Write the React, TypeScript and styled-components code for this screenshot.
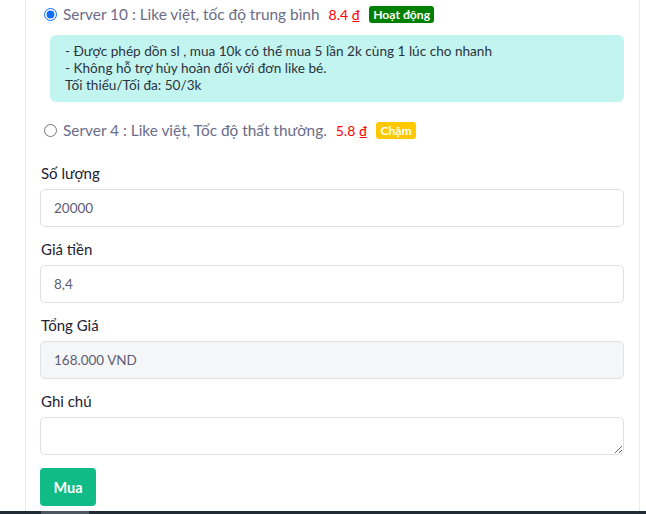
import React from 'react'
import styled, { createGlobalStyle } from 'styled-components'

const GlobalStyle = createGlobalStyle`
  html, body {
    margin: 0;
    padding: 0;
    background: #fff;
    font-family: Lato, "Noto Sans", sans-serif;
  }
  * { box-sizing: border-box; }
`

const Page = styled.div`
  display: flex;
  flex-direction: column;
  width: 646px;
  height: 514px;
  overflow: hidden;
`

const Card = styled.div`
  margin-left: 25px;
  width: 615px;
  height: 511px;
  flex-shrink: 0;
  border-left: 1px solid #e9ebf0;
  border-right: 1px solid #e9ebf0;
  padding: 3px 15px 0 14px;
  display: flex;
  flex-direction: column;
`

const ServerRow = styled.label<{ $mt?: number }>`
  display: flex;
  align-items: center;
  height: 22px;
  padding-left: 4px;
  font-size: 15.4px;
  color: #6b6c88;
  white-space: nowrap;
  margin-top: ${(p) => p.$mt ?? 0}px;
`

const Radio = styled.input`
  width: 13px;
  height: 13px;
  margin: 0 6px 0 0;
  accent-color: #0d6efd;
`

const Price = styled.span`
  color: #ff0000;
  margin-left: 9px;
  font-size: 14px;
`

const Badge = styled.span<{ $bg: string }>`
  display: inline-flex;
  align-items: center;
  height: 17px;
  padding: 0 4px;
  margin-left: 9px;
  border-radius: 3px;
  background: ${(p) => p.$bg};
  color: #fff;
  font-size: 12.2px;
  font-weight: 700;
`

const Note = styled.div`
  margin: 10px 0 0 10px;
  background: #c3f5f0;
  border-radius: 6px;
  padding: 8px 15px;
  font-size: 13.6px;
  line-height: 17px;
  color: #2b3340;
`

const Group = styled.div<{ $mt: number }>`
  display: flex;
  flex-direction: column;
  margin-top: ${(p) => p.$mt}px;
`

const Label = styled.div`
  height: 22px;
  line-height: 22px;
  font-size: 15px;
  color: #222230;
  margin-bottom: 5px;
  padding-left: 1px;
`

const Field = styled.input<{ $disabled?: boolean }>`
  height: 38px;
  width: 100%;
  border: 1px solid #dee0e6;
  border-radius: 5px;
  padding: 0 13px;
  font-family: inherit;
  font-size: 13.5px;
  color: #5e5d75;
  background: ${(p) => (p.$disabled ? '#f5f6f8' : '#fff')};
  outline: none;
`

const Area = styled.textarea`
  height: 38px;
  width: 100%;
  border: 1px solid #dee0e6;
  border-radius: 5px;
  padding: 6px 13px;
  font-family: inherit;
  font-size: 13.5px;
  outline: none;
  resize: vertical;
  display: block;
`

const BuyButton = styled.button`
  margin-top: 13px;
  align-self: flex-start;
  width: 56px;
  height: 38px;
  border: none;
  border-radius: 4px;
  background: #10bb85;
  color: #fff;
  font-family: inherit;
  font-size: 14.5px;
  font-weight: 700;
`

const Footer = styled.div`
  height: 3px;
  flex-shrink: 0;
  background: #1f2c34;
  display: flex;
`

const FooterMark = styled.div`
  margin-left: 41px;
  width: 48px;
  background: #4c565e;
`

export default function App() {
  return (
    <Page>
      <GlobalStyle />
      <Card>
        <ServerRow>
          <Radio type="radio" name="server" defaultChecked />
          <span>Server 10 : Like việt, tốc độ trung bình</span>
          <Price>8.4 ₫</Price>
          <Badge $bg="#008000">Hoạt động</Badge>
        </ServerRow>
        <Note>
          - Được phép dồn sl , mua 10k có thể mua 5 lần 2k cùng 1 lúc cho nhanh
          <br />- Không hỗ trợ hủy hoàn đối với đơn like bé.
          <br />
          Tối thiểu/Tối đa: 50/3k
        </Note>
        <ServerRow $mt={17}>
          <Radio type="radio" name="server" />
          <span>Server 4 : Like việt, Tốc độ thất thường.</span>
          <Price>5.8 ₫</Price>
          <Badge $bg="#ffc800">Chậm</Badge>
        </ServerRow>
        <Group $mt={21}>
          <Label>Số lượng</Label>
          <Field defaultValue="20000" />
        </Group>
        <Group $mt={11}>
          <Label>Giá tiền</Label>
          <Field defaultValue="8,4" />
        </Group>
        <Group $mt={11}>
          <Label>Tổng Giá</Label>
          <Field $disabled readOnly defaultValue="168.000 VND" />
        </Group>
        <Group $mt={11}>
          <Label>Ghi chú</Label>
          <Area />
        </Group>
        <BuyButton>Mua</BuyButton>
      </Card>
      <Footer>
        <FooterMark />
      </Footer>
    </Page>
  )
}
